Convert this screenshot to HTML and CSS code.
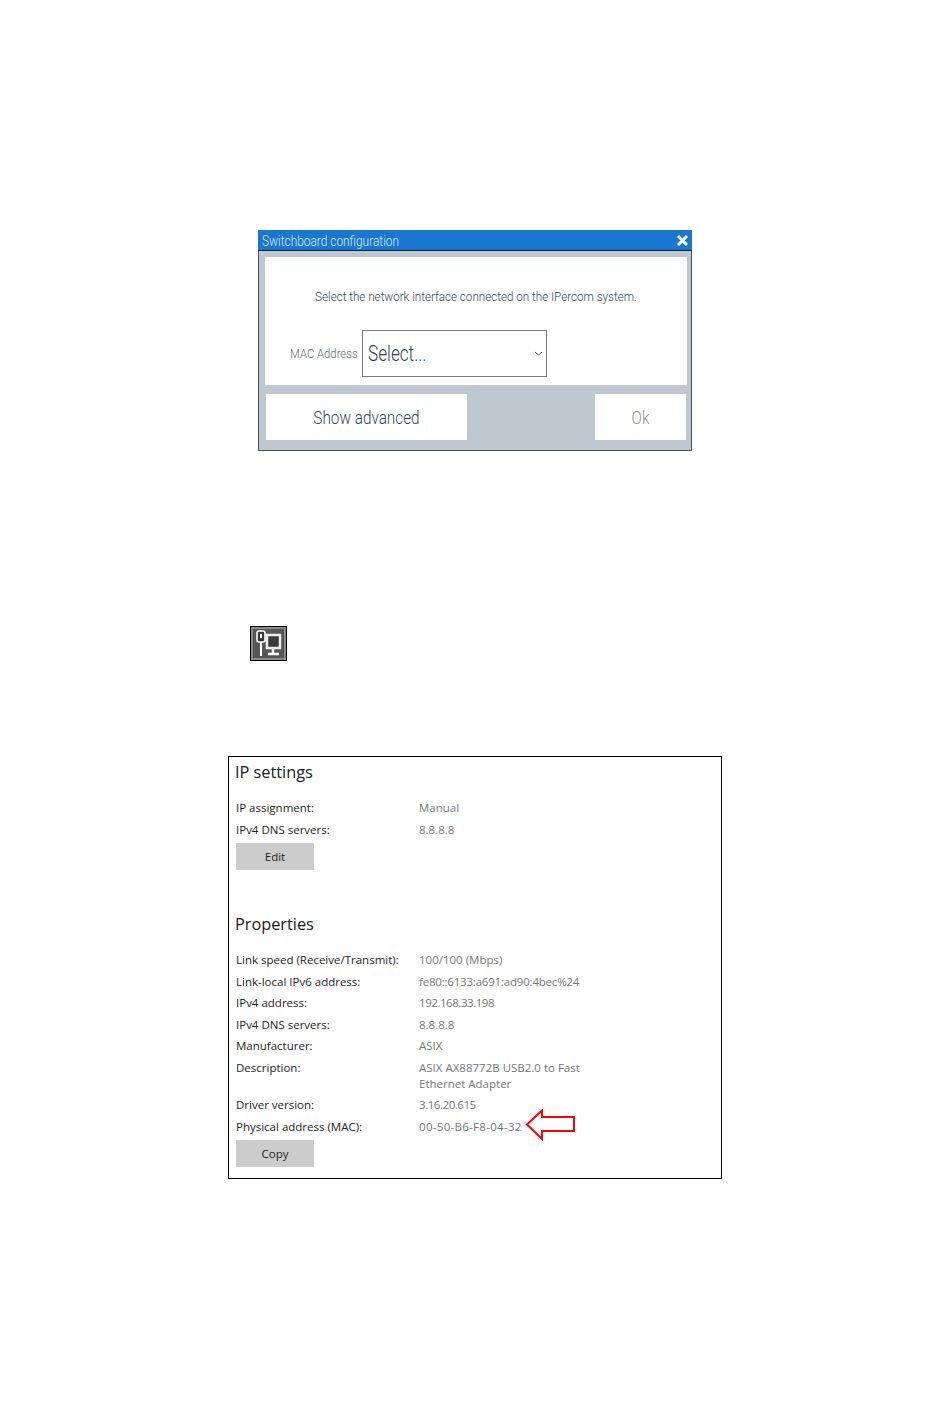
FILE: index.html
```html
<!DOCTYPE html>
<html lang="en">
<head>
    <meta charset="UTF-8">
    <title>Switchboard configuration</title>
    <link rel="stylesheet" href="styles.css">
</head>
<body>
    <div class="dialog">
        <div class="titlebar">
            <span class="narrow">Switchboard configuration</span>
            <svg class="close" width="13" height="13" viewBox="0 0 13 13"><path d="M2 2L11 11M11 2L2 11" stroke="#fff" stroke-width="3"/></svg>
        </div>
        <div class="dialog-body">
            <div class="dialog-panel">
                <p class="prompt">Select the network interface connected on the IPercom system.</p>
                <div class="mac-row">
                    <span class="mac-label narrow">MAC Address</span>
                    <div class="select">
                        <span class="narrow select-text">Select...</span>
                        <svg width="9" height="5" viewBox="0 0 9 5"><path d="M1 1L4.5 4L8 1" fill="none" stroke="#555" stroke-width="1"/></svg>
                    </div>
                </div>
            </div>
            <div class="dialog-buttons">
                <div class="btn btn-advanced"><span class="narrow centered">Show advanced</span></div>
                <div class="btn btn-ok"><span class="narrow centered">Ok</span></div>
            </div>
        </div>
    </div>

    <div class="icon-wrap">
        <div class="net-icon">
            <svg width="31" height="29" viewBox="0 0 31 29">
                <rect width="31" height="29" fill="#565656"/>
                <rect x="14" y="6" width="13" height="13" fill="#3a3a3a" stroke="#eee" stroke-width="2.500"/>
                <path d="M20 20V24M15 25H26" stroke="#fff" stroke-width="2.500"/>
                <rect x="4" y="2" width="8" height="11" rx="2" fill="#3a3a3a" stroke="#fff" stroke-width="1.600"/>
                <rect x="7" y="5" width="2" height="4" fill="#fff"/>
                <path d="M8 13V27" stroke="#fff" stroke-width="2"/>
            </svg>
        </div>
    </div>

    <div class="settings">
        <h2>IP settings</h2>
        <div class="rows">
            <div class="row"><span class="key">IP assignment:</span><span class="val">Manual</span></div>
            <div class="row"><span class="key">IPv4 DNS servers:</span><span class="val">8.8.8.8</span></div>
        </div>
        <div class="grey-btn">Edit</div>

        <h2 class="props-title">Properties</h2>
        <div class="rows">
            <div class="row"><span class="key">Link speed (Receive/Transmit):</span><span class="val">100/100 (Mbps)</span></div>
            <div class="row"><span class="key">Link-local IPv6 address:</span><span class="val tight">fe80::6133:a691:ad90:4bec%24</span></div>
            <div class="row"><span class="key">IPv4 address:</span><span class="val tighter">192.168.33.198</span></div>
            <div class="row"><span class="key">IPv4 DNS servers:</span><span class="val">8.8.8.8</span></div>
            <div class="row"><span class="key">Manufacturer:</span><span class="val">ASIX</span></div>
            <div class="row row-tall"><span class="key">Description:</span><span class="val">ASIX AX88772B USB2.0 to Fast<br>Ethernet Adapter</span></div>
            <div class="row"><span class="key">Driver version:</span><span class="val tighter">3.16.20.615</span></div>
            <div class="row">
                <span class="key">Physical address (MAC):</span>
                <span class="val wide">00-50-B6-F8-04-32</span>
                <svg class="arrow" width="52" height="32" viewBox="0 0 52 32"><path d="M2 15.500L17 1.500V8H49V22H17V30Z" fill="#fff" stroke="#f00" stroke-width="2"/></svg>
            </div>
        </div>
        <div class="grey-btn">Copy</div>
    </div>
</body>
</html>
```

FILE: styles.css
```css
body {
    margin: 0;
    padding-top: 230px;
    background-color: #ffffff;
    display: flex;
    flex-direction: column;
    align-items: center;
}

.dialog {
    width: 434px;
    height: 221px;
    box-sizing: border-box;
    border: 1px solid #4a4f55;
    border-top: 0;
    background-color: #bfc7d0;
    font-family: "Roboto", "Liberation Sans", sans-serif;
    font-weight: 300;
    color: #2f3f58;
}

/* the dialog font is a condensed one, none is installed */
.narrow {
    display: inline-block;
    white-space: nowrap;
    transform: scaleX(0.85);
    transform-origin: left center;
}

.narrow.centered {
    transform-origin: center;
}

.titlebar {
    height: 19px;
    background-color: #1976d2;
    border-bottom: 1px solid #10233a;
    margin: 0 -1px;
    padding: 1px 3px 0 4px;
    display: flex;
    justify-content: space-between;
    align-items: center;
    color: #dcebf8;
    font-size: 14px;
}

.close {
    margin-top: -1px;
}

.dialog-body {
    padding: 6px 5px 0 6px;
}

.dialog-panel {
    height: 128px;
    margin-right: -1px;
    background-color: #ffffff;
    overflow: hidden;
}

.prompt {
    margin: 32px 0 0;
    text-align: center;
    font-size: 13px;
    line-height: 16px;
    transform: scaleX(0.895);
}

.mac-row {
    margin-top: 25px;
    padding-left: 25px;
    display: flex;
    align-items: center;
    gap: 4px;
}

.mac-label {
    width: 68px;
    font-size: 13px;
    transform: scaleX(0.87);
    color: #5a6572;
}

.select {
    width: 185px;
    height: 47px;
    box-sizing: border-box;
    border: 1px solid #7a7a7a;
    padding: 0 3px 0 5px;
    display: flex;
    justify-content: space-between;
    align-items: center;
    font-size: 22px;
}

.select-text {
    transform: scaleX(0.78);
}

.dialog-buttons {
    margin-top: 9px;
    padding-left: 1px;
    display: flex;
    justify-content: space-between;
}

.btn {
    height: 46px;
    background-color: #ffffff;
    display: flex;
    justify-content: center;
    align-items: center;
    font-size: 18px;
}

.btn-advanced {
    width: 201px;
}

.btn-ok {
    width: 91px;
    color: #8f8f86;
}

.icon-wrap {
    width: 950px;
    padding: 175px 0 0 250px;
    box-sizing: border-box;
}

.net-icon {
    width: 35px;
    height: 29px;
    border: 1px solid #000000;
    padding: 2px 0;
    background-color: #8a8a8a;
    display: flex;
    justify-content: center;
}

.settings {
    width: 494px;
    height: 423px;
    margin-top: 95px;
    box-sizing: border-box;
    border: 1px solid #000000;
    padding: 4px 0 0 7px;
    font-family: "Open Sans", "Liberation Sans", sans-serif;
    font-size: 11.500px;
    color: #222222;
}

h2 {
    margin: 0 0 0 -1px;
    font-weight: 400;
    font-size: 16.300px;
    line-height: 22px;
    color: #1a1a1a;
}

.rows {
    margin-top: 17px;
}

.row {
    display: flex;
    align-items: flex-start;
    min-height: 21.500px;
    line-height: 16px;
}

.row-tall {
    padding-bottom: 5.500px;
}

.key {
    width: 183px;
    flex-shrink: 0;
}

.val {
    color: #767676;
}

.val.tight {
    letter-spacing: -0.200px;
}

.val.tighter {
    letter-spacing: -0.450px;
}

.val.wide {
    letter-spacing: 0.300px;
}

.arrow {
    margin: -10px 0 -6px 3px;
}

.grey-btn {
    width: 78px;
    height: 27px;
    background-color: #cccccc;
    display: flex;
    justify-content: center;
    align-items: center;
}

.props-title {
    margin-top: 43px;
}
```
